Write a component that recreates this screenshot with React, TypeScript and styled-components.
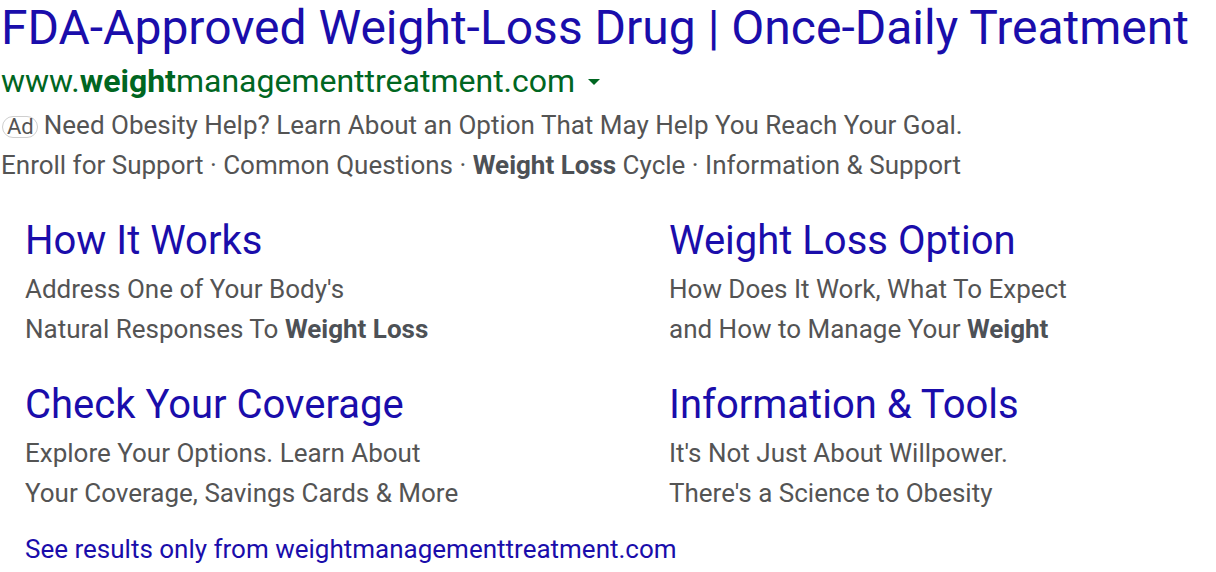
import React from "react";
import styled, { createGlobalStyle } from "styled-components";

const Global = createGlobalStyle`
  html, body { margin: 0; padding: 0; background: #fff; }
  body { font-family: Roboto, "Noto Sans", Arial, sans-serif; }
`;

const Page = styled.div`
  padding: 0 0 0 1px;
  width: 1216px;
`;

const Title = styled.a`
  display: block;
  font-size: 48px;
  line-height: 56px;
  color: #1a0dab;
  text-decoration: none;
  white-space: nowrap;
`;

const UrlRow = styled.div`
  display: flex;
  align-items: center;
  gap: 13px;
  font-size: 32px;
  line-height: 40px;
  color: #006621;
  margin-top: 5px;
`;

const Caret = styled.span`
  width: 0;
  height: 0;
  border-left: 6.5px solid transparent;
  border-right: 6.5px solid transparent;
  border-top: 6px solid #006621;
  margin-top: 2px;
`;

const Desc = styled.div<{ $first?: boolean }>`
  font-size: 26px;
  line-height: 39px;
  height: 39px;
  color: #545454;
  margin-top: ${(p) => (p.$first ? "5px" : "1px")};
  white-space: nowrap;
`;

const Badge = styled.span`
  display: inline-flex;
  align-items: center;
  box-sizing: border-box;
  height: 22px;
  font-size: 22px;
  line-height: 1;
  padding: 0 3px 0 4px;
  border: 1.5px solid #cfcfcf;
  border-radius: 11px;
  color: #545454;
  margin: 0 6px 0 1px;
`;

const B = styled.b`
  font-weight: 700;
  color: #4d5156;
`;

const Grid = styled.div`
  display: grid;
  grid-template-columns: 644px 1fr;
  row-gap: 26px;
  padding-left: 24px;
  margin-top: 26px;
`;

const Sitelink = styled.div`
  display: flex;
  flex-direction: column;
`;

const SiteTitle = styled.a`
  font-size: 40px;
  line-height: 56px;
  padding-top: 2px;
  color: #1a0dab;
  text-decoration: none;
  white-space: nowrap;
`;

const SiteDesc = styled.div`
  font-size: 26px;
  line-height: 40px;
  color: #545454;
  white-space: nowrap;
`;

const Footer = styled.a`
  display: block;
  margin: 18px 0 0 24px;
  font-size: 26px;
  line-height: 36px;
  color: #1a0dab;
  text-decoration: none;
`;

const links = [
  { t: "How It Works", l1: <>Address One of Your Body's</>, l2: <>Natural Responses To <B>Weight Loss</B></> },
  { t: "Weight Loss Option", l1: <>How Does It Work, What To Expect</>, l2: <>and How to Manage Your <B>Weight</B></> },
  { t: "Check Your Coverage", l1: <>Explore Your Options. Learn About</>, l2: <>Your Coverage, Savings Cards &amp; More</> },
  { t: "Information & Tools", l1: <>It's Not Just About Willpower.</>, l2: <>There's a Science to Obesity</> },
];

export default function App() {
  return (
    <Page>
      <Global />
      <Title href="#">FDA-Approved Weight-Loss Drug | Once-Daily Treatment</Title>
      <UrlRow>
        <span>www.<b>weight</b>managementtreatment.com</span>
        <Caret />
      </UrlRow>
      <Desc $first>
        <Badge>Ad</Badge>Need Obesity Help? Learn About an Option That May Help You Reach Your Goal.
      </Desc>
      <Desc>
        Enroll for Support · Common Questions · <B>Weight Loss</B> Cycle · Information &amp; Support
      </Desc>
      <Grid>
        {links.map((s) => (
          <Sitelink key={s.t}>
            <SiteTitle href="#">{s.t}</SiteTitle>
            <SiteDesc>{s.l1}</SiteDesc>
            <SiteDesc>{s.l2}</SiteDesc>
          </Sitelink>
        ))}
      </Grid>
      <Footer href="#">See results only from weightmanagementtreatment.com</Footer>
    </Page>
  );
}
